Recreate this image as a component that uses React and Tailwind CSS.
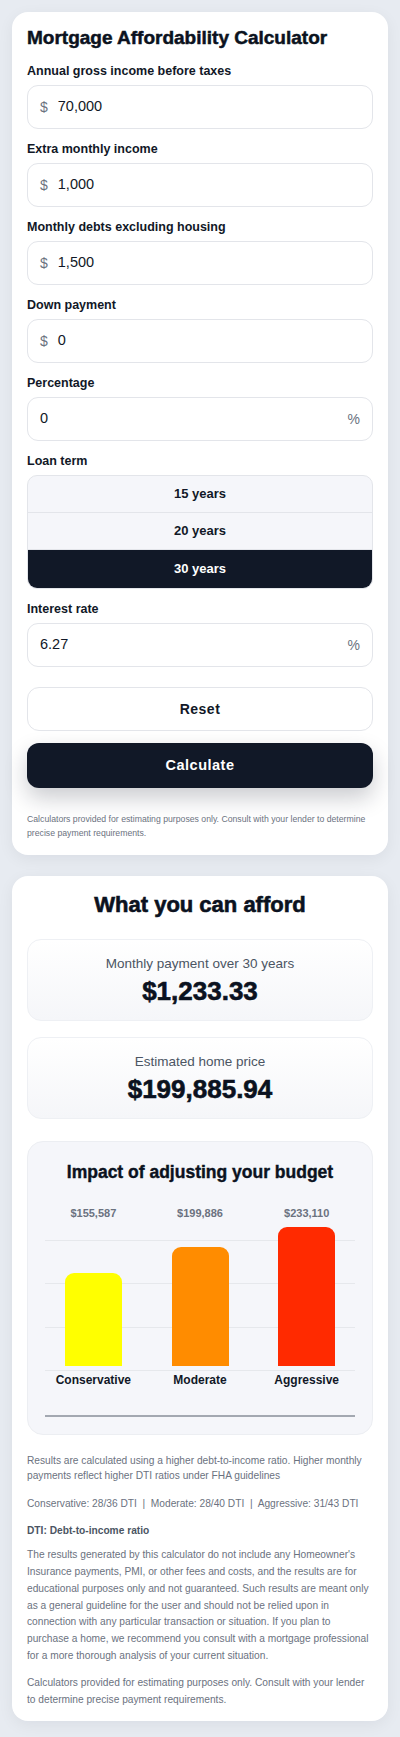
import React from "react";

const font = { fontFamily: '"Liberation Sans", Arial, sans-serif' };

function Field({ label, prefix, suffix, value }) {
  return (
    <div className="flex flex-col">
      <div className="text-[12.5px] leading-[16px] font-bold text-[#111827]">{label}</div>
      <div className="mt-[6px] h-[44px] rounded-[11px] border-[1.5px] border-[#e3e5ea] bg-white flex items-center px-[12px]">
        {prefix && <span className="text-[14px] text-[#6b7280] mr-[10px]">{prefix}</span>}
        <span className="text-[14.5px] text-[#111827] flex-1">{value}</span>
        {suffix && <span className="text-[14px] text-[#6b7280]">{suffix}</span>}
      </div>
    </div>
  );
}

function Stat({ label, value }) {
  return (
    <div className="h-[82px] rounded-[14px] border border-[#eef0f4] bg-linear-to-b from-white to-[#f5f6f9] flex flex-col items-center pt-[15px]">
      <div className="text-[13.5px] leading-[18px] text-[#4b5563]">{label}</div>
      <div className="mt-[3px] text-[26px] leading-[30px] font-bold text-[#0b1220] [-webkit-text-stroke:0.6px_#0b1220]">{value}</div>
    </div>
  );
}

const bars = [
  { label: "Conservative", value: 155587, color: "#ffff00" },
  { label: "Moderate", value: 199886, color: "#ff8c00" },
  { label: "Aggressive", value: 233110, color: "#ff2a00" },
];

export default function App() {
  const max = 233110;
  return (
    <div style={font} className="min-h-[1737px] bg-[#e7ebf1] px-[12px] pt-[12px] pb-[15px] flex flex-col gap-[21px]">
      {/* Card 1 */}
      <div className="bg-white rounded-[16px] shadow-[0_4px_16px_rgba(15,23,42,0.06)] px-[15px] pt-[14px] pb-[15px]">
        <h1 className="text-[19px] leading-[23px] font-bold text-[#0b1220] [-webkit-text-stroke:0.5px_#0b1220]">Mortgage Affordability Calculator</h1>
        <div className="mt-[14px] flex flex-col gap-[12px]">
          <Field label="Annual gross income before taxes" prefix="$" value="70,000" />
          <Field label="Extra monthly income" prefix="$" value="1,000" />
          <Field label="Monthly debts excluding housing" prefix="$" value="1,500" />
          <Field label="Down payment" prefix="$" value="0" />
          <Field label="Percentage" suffix="%" value="0" />
          <div className="flex flex-col">
            <div className="text-[12.5px] leading-[16px] font-bold text-[#111827]">Loan term</div>
            <div className="mt-[6px] rounded-[10px] border border-[#e3e5ea] bg-[#f5f6fa] overflow-hidden flex flex-col divide-y divide-[#e3e5ea]">
              <div className="h-[37px] flex items-center justify-center text-[13px] font-bold text-[#111827]">15 years</div>
              <div className="h-[37px] flex items-center justify-center text-[13px] font-bold text-[#111827]">20 years</div>
              <div className="h-[38px] flex items-center justify-center text-[13px] font-bold text-white bg-[#111827]">30 years</div>
            </div>
          </div>
          <Field label="Interest rate" suffix="%" value="6.27" />
        </div>
        <button className="mt-[20px] w-full h-[44px] rounded-[12px] border-[1.5px] border-[#e3e5ea] bg-white text-[14px] font-bold tracking-[0.5px] text-[#111827]">
          Reset
        </button>
        <button className="mt-[12px] w-full h-[45px] rounded-[12px] bg-[#111827] text-[14.5px] font-bold tracking-[0.5px] text-white shadow-[0_10px_22px_rgba(17,24,39,0.22)]">
          Calculate
        </button>
        <p className="mt-[24px] text-[8.7px] leading-[14px] text-[#6b7280]">
          Calculators provided for estimating purposes only. Consult with your lender to determine precise payment requirements.
        </p>
      </div>

      {/* Card 2 */}
      <div className="bg-white rounded-[16px] shadow-[0_4px_16px_rgba(15,23,42,0.06)] px-[15px] pt-[16px] pb-[12px]">
        <h2 className="text-center text-[22px] leading-[26px] font-bold text-[#0b1220] [-webkit-text-stroke:0.6px_#0b1220]">What you can afford</h2>
        <div className="mt-[21px] flex flex-col gap-[16px]">
          <Stat label="Monthly payment over 30 years" value="$1,233.33" />
          <Stat label="Estimated home price" value="$199,885.94" />
        </div>

        <div className="mt-[22px] rounded-[16px] border border-[#eceef2] bg-[#f5f6fa] px-[12px] pt-[19px] pb-[17px]">
          <h3 className="text-center text-[17.5px] leading-[22px] font-bold text-[#0b1220] [-webkit-text-stroke:0.4px_#0b1220]">Impact of adjusting your budget</h3>
          <div className="relative mt-[23px]">
            <div className="absolute left-[5px] right-[5px] top-[34px] h-px bg-[#e6e8ec]" />
            <div className="absolute left-[5px] right-[5px] top-[77px] h-px bg-[#e6e8ec]" />
            <div className="absolute left-[5px] right-[5px] top-[121px] h-px bg-[#e6e8ec]" />
            <div className="absolute left-[5px] right-[5px] top-[164px] h-px bg-[#e6e8ec]" />
            <div className="relative flex">
              {bars.map((b) => (
                <div key={b.label} className="flex-1 flex flex-col items-center">
                  <div className="h-[14px] text-[11px] leading-[14px] font-bold text-[#6b7280]">
                    ${b.value.toLocaleString("en-US")}
                  </div>
                  <div className="h-[146px] flex items-end">
                    <div
                      className="w-[57px] rounded-t-[9px]"
                      style={{ height: `${(139 * b.value) / max}px`, backgroundColor: b.color }}
                    />
                  </div>
                  <div className="mt-[7px] text-[12px] leading-[15px] font-bold text-[#111827]">{b.label}</div>
                </div>
              ))}
            </div>
          </div>
          <div className="mt-[27px] mx-[5px] h-[2px] bg-[#a3a8b1]" />
        </div>

        <div className="mt-[18px] text-[10.2px] text-[#6b7280]">
          <p className="leading-[15.3px]">
            Results are calculated using a higher debt-to-income ratio. Higher monthly payments reflect higher DTI ratios under FHA guidelines
          </p>
          <p className="mt-[12px] leading-[15.3px]">
            Conservative: 28/36 DTI&nbsp; |&nbsp; Moderate: 28/40 DTI&nbsp; |&nbsp; Aggressive: 31/43 DTI
          </p>
          <p className="mt-[12px] leading-[15.3px] font-bold text-[#4b5563]">DTI: Debt-to-income ratio</p>
          <p className="mt-[9px] leading-[16.8px]">
            The results generated by this calculator do not include any Homeowner's Insurance payments, PMI, or other fees and costs, and the results are for educational purposes only and not guaranteed. Such results are meant only as a general guideline for the user and should not be relied upon in connection with any particular transaction or situation. If you plan to purchase a home, we recommend you consult with a mortgage professional for a more thorough analysis of your current situation.
          </p>
          <p className="mt-[9px] leading-[17.5px]">
            Calculators provided for estimating purposes only. Consult with your lender to determine precise payment requirements.
          </p>
        </div>
      </div>
    </div>
  );
}
